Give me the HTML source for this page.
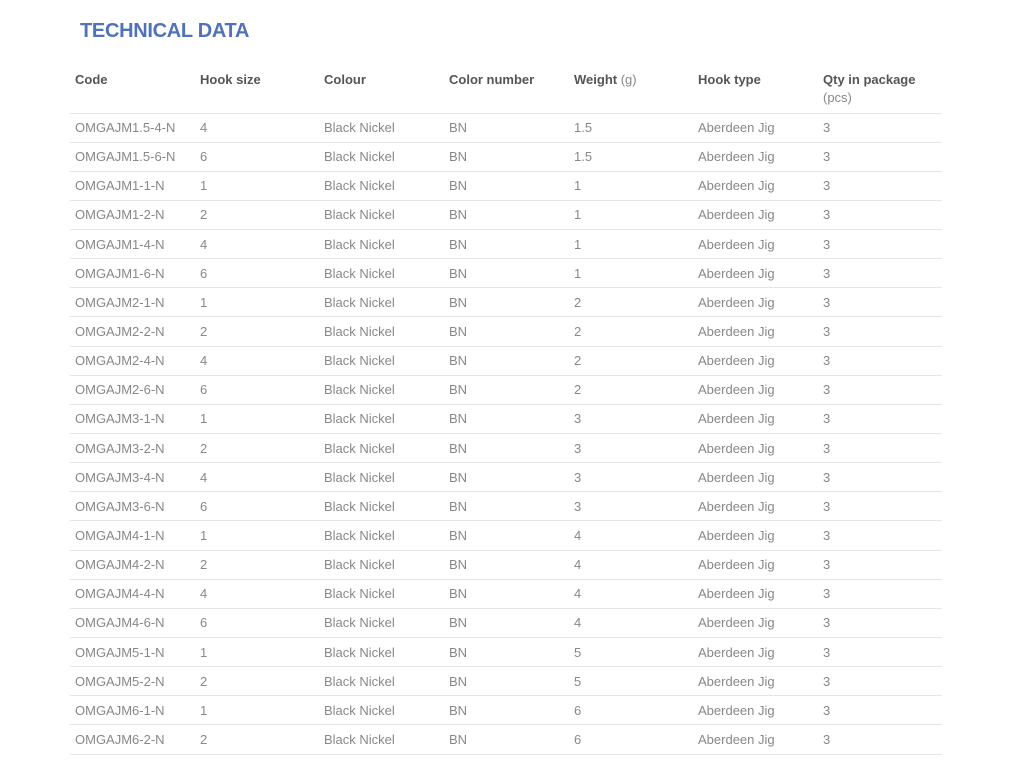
<!DOCTYPE html>
<html><head><meta charset="utf-8"><style>
body{margin:0;background:#fff;font-family:"Liberation Sans",sans-serif;}
h1{position:absolute;left:80px;top:20px;margin:0;font-size:20px;font-weight:bold;color:#4f72b8;letter-spacing:-0.3px;}
table{position:absolute;left:70px;top:66px;width:872px;border-collapse:collapse;table-layout:fixed;}
td,th{padding:0 0 0 5px;text-align:left;font-size:13px;color:#888;height:28.15px;border-bottom:1px solid #e6e6e6;white-space:nowrap;}
th{font-weight:bold;color:#555;vertical-align:top;height:47px;line-height:18px;padding-top:5px;box-sizing:border-box;}
th span{font-weight:normal;color:#888;}
</style></head><body>
<h1>TECHNICAL DATA</h1>
<table>
<colgroup><col style="width:125px"><col style="width:124px"><col style="width:125px"><col style="width:125px"><col style="width:124px"><col style="width:125px"><col style="width:124px"></colgroup>
<tr><th>Code</th><th>Hook size</th><th>Colour</th><th>Color number</th><th>Weight <span>(g)</span></th><th>Hook type</th><th>Qty in package<br><span>(pcs)</span></th></tr>
<tr><td>OMGAJM1.5-4-N</td><td>4</td><td>Black Nickel</td><td>BN</td><td>1.5</td><td>Aberdeen Jig</td><td>3</td></tr>
<tr><td>OMGAJM1.5-6-N</td><td>6</td><td>Black Nickel</td><td>BN</td><td>1.5</td><td>Aberdeen Jig</td><td>3</td></tr>
<tr><td>OMGAJM1-1-N</td><td>1</td><td>Black Nickel</td><td>BN</td><td>1</td><td>Aberdeen Jig</td><td>3</td></tr>
<tr><td>OMGAJM1-2-N</td><td>2</td><td>Black Nickel</td><td>BN</td><td>1</td><td>Aberdeen Jig</td><td>3</td></tr>
<tr><td>OMGAJM1-4-N</td><td>4</td><td>Black Nickel</td><td>BN</td><td>1</td><td>Aberdeen Jig</td><td>3</td></tr>
<tr><td>OMGAJM1-6-N</td><td>6</td><td>Black Nickel</td><td>BN</td><td>1</td><td>Aberdeen Jig</td><td>3</td></tr>
<tr><td>OMGAJM2-1-N</td><td>1</td><td>Black Nickel</td><td>BN</td><td>2</td><td>Aberdeen Jig</td><td>3</td></tr>
<tr><td>OMGAJM2-2-N</td><td>2</td><td>Black Nickel</td><td>BN</td><td>2</td><td>Aberdeen Jig</td><td>3</td></tr>
<tr><td>OMGAJM2-4-N</td><td>4</td><td>Black Nickel</td><td>BN</td><td>2</td><td>Aberdeen Jig</td><td>3</td></tr>
<tr><td>OMGAJM2-6-N</td><td>6</td><td>Black Nickel</td><td>BN</td><td>2</td><td>Aberdeen Jig</td><td>3</td></tr>
<tr><td>OMGAJM3-1-N</td><td>1</td><td>Black Nickel</td><td>BN</td><td>3</td><td>Aberdeen Jig</td><td>3</td></tr>
<tr><td>OMGAJM3-2-N</td><td>2</td><td>Black Nickel</td><td>BN</td><td>3</td><td>Aberdeen Jig</td><td>3</td></tr>
<tr><td>OMGAJM3-4-N</td><td>4</td><td>Black Nickel</td><td>BN</td><td>3</td><td>Aberdeen Jig</td><td>3</td></tr>
<tr><td>OMGAJM3-6-N</td><td>6</td><td>Black Nickel</td><td>BN</td><td>3</td><td>Aberdeen Jig</td><td>3</td></tr>
<tr><td>OMGAJM4-1-N</td><td>1</td><td>Black Nickel</td><td>BN</td><td>4</td><td>Aberdeen Jig</td><td>3</td></tr>
<tr><td>OMGAJM4-2-N</td><td>2</td><td>Black Nickel</td><td>BN</td><td>4</td><td>Aberdeen Jig</td><td>3</td></tr>
<tr><td>OMGAJM4-4-N</td><td>4</td><td>Black Nickel</td><td>BN</td><td>4</td><td>Aberdeen Jig</td><td>3</td></tr>
<tr><td>OMGAJM4-6-N</td><td>6</td><td>Black Nickel</td><td>BN</td><td>4</td><td>Aberdeen Jig</td><td>3</td></tr>
<tr><td>OMGAJM5-1-N</td><td>1</td><td>Black Nickel</td><td>BN</td><td>5</td><td>Aberdeen Jig</td><td>3</td></tr>
<tr><td>OMGAJM5-2-N</td><td>2</td><td>Black Nickel</td><td>BN</td><td>5</td><td>Aberdeen Jig</td><td>3</td></tr>
<tr><td>OMGAJM6-1-N</td><td>1</td><td>Black Nickel</td><td>BN</td><td>6</td><td>Aberdeen Jig</td><td>3</td></tr>
<tr><td>OMGAJM6-2-N</td><td>2</td><td>Black Nickel</td><td>BN</td><td>6</td><td>Aberdeen Jig</td><td>3</td></tr>
</table>
</body></html>
